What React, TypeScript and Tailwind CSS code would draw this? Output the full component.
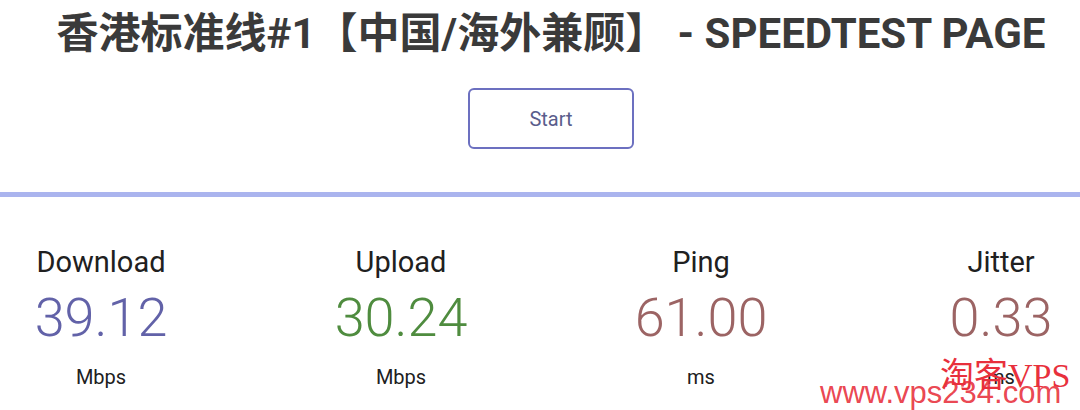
import React from 'react';

const stats = [
  { label: 'Download', value: '39.12', unit: 'Mbps', color: 'text-[#6262a8]' },
  { label: 'Upload', value: '30.24', unit: 'Mbps', color: 'text-[#4f8c3f]' },
  { label: 'Ping', value: '61.00', unit: 'ms', color: 'text-[#9c6464]' },
  { label: 'Jitter', value: '0.33', unit: 'ms', color: 'text-[#9c6464]' },
];

const App = () => {
  return (
    <div className="relative w-[1080px] h-[410px] overflow-hidden bg-white font-['Roboto','Noto_Sans_CJK_SC',sans-serif]">
      <h1 className="pl-[22px] pt-[10px] text-center text-[42px] leading-[48px] font-bold text-[#3a3a3a] whitespace-nowrap">
        香港标准线#1【中国/海外兼顾】 - SPEEDTEST PAGE
      </h1>

      <div className="flex justify-center pl-[22px] pt-[30px]">
        <button className="w-[166px] h-[61px] rounded-[6px] border-2 border-[#6c70c0] text-[20px] text-[#5a5d8c]">
          Start
        </button>
      </div>

      <div className="mt-[43px] h-[5px] bg-[#aab4ee]" />

      <div className="flex gap-[150px] pl-[26px] pt-[48px]">
        {stats.map((s) => (
          <div key={s.label} className="w-[150px] flex flex-col items-center">
            <div className="text-[29px] leading-[34px] text-[#202020] whitespace-nowrap">{s.label}</div>
            <div className={`mt-[8px] text-[54px] leading-[62px] font-light whitespace-nowrap ${s.color}`}>{s.value}</div>
            <div className="mt-[16px] text-[20px] leading-[24px] text-[#202020]">{s.unit}</div>
          </div>
        ))}
      </div>

      {/* watermark */}
      <div className="absolute left-[820px] top-[358px] w-[260px] pointer-events-none whitespace-nowrap">
        <div className="pl-[120px] text-[34px] leading-[36px] text-[#e8303c] font-['Liberation_Serif','Noto_Sans_CJK_SC',serif]">
          淘客VPS
        </div>
        <div className="-mt-[18px] text-[31px] leading-[34px] text-[#e8303c]/90 font-['Liberation_Sans',sans-serif]">
          www.vps234.com
        </div>
      </div>
    </div>
  );
};

export default App;
